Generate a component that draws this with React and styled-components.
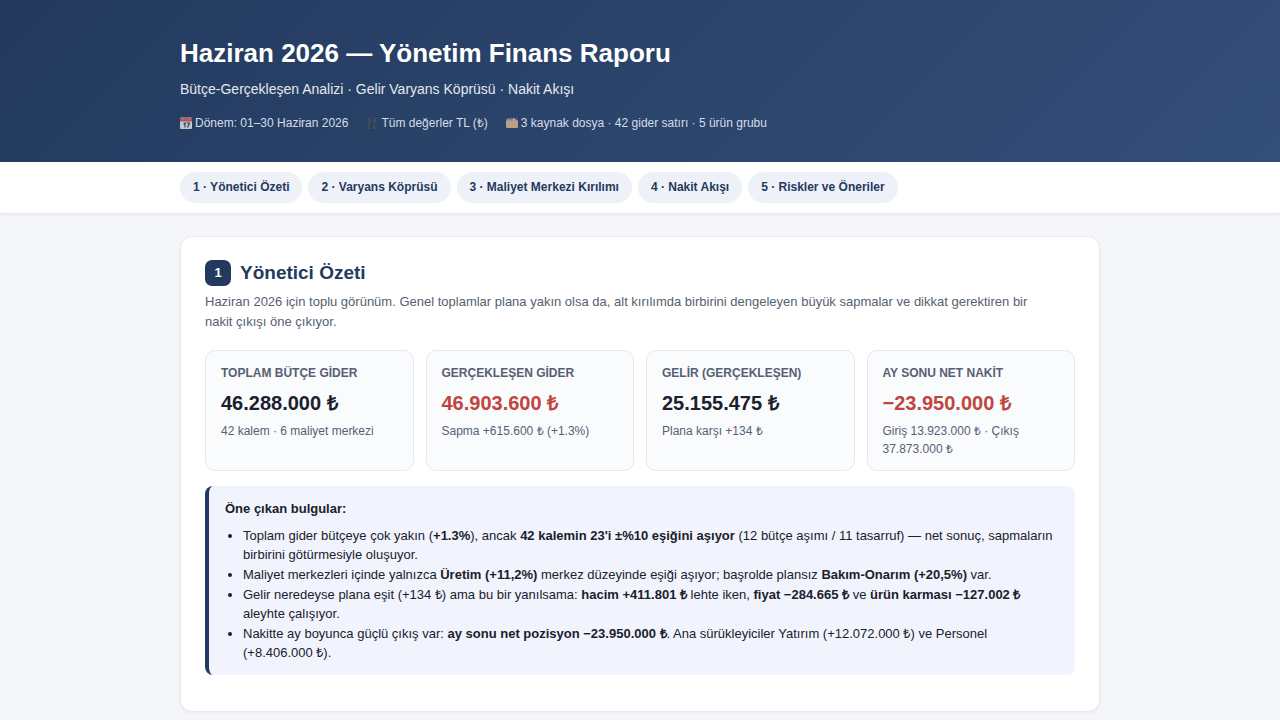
import React from "react"
import styled, { createGlobalStyle, ThemeProvider } from "styled-components"

const theme = {
  colors: {
    navy: "#233a5e",
    ink: "#1a202c",
    muted: "#566072",
    line: "#e4e8f0",
    page: "#f4f6fa",
    chip: "#eef1f8",
    tile: "#fafbfd",
    note: "#f1f4fc",
    red: "#bf463f",
  },
}

const GlobalStyle = createGlobalStyle`
  * {
    box-sizing: border-box;
  }
  body {
    margin: 0;
    background: ${theme.colors.page};
    color: ${theme.colors.ink};
    font-family: "Liberation Sans", Arial, sans-serif;
    font-size: 14px;
    line-height: 20px;
  }
`

const Wrap = styled.div`
  max-width: 968px;
  margin: 0 auto;
  padding: 0 24px;
`

const Header = styled.header`
  background: linear-gradient(135deg, #233a5e, #334e78);
  color: #fff;
  padding: 36px 0 28px;
`

const Title = styled.h1`
  margin: 0 0 8px;
  font-size: 26px;
  line-height: 34px;
`

const Subtitle = styled.p`
  margin: 0 0 12px;
  font-size: 14px;
  line-height: 22px;
  color: #e4e8ef;
`

const Meta = styled.div`
  display: flex;
  flex-wrap: wrap;
  gap: 18px;
  font-size: 12px;
  line-height: 22px;
  color: #d7dde7;
`

const MetaItem = styled.span`
  display: inline-flex;
  align-items: center;
  gap: 3px;
`

const Nav = styled.nav`
  background: #fff;
  border-bottom: 1px solid ${({ theme }) => theme.colors.line};
  box-shadow: 0 1px 4px rgba(20, 35, 60, 0.06);
  padding: 10px 0;
`

const NavList = styled(Wrap)`
  display: flex;
  flex-wrap: wrap;
  gap: 6px;
`

const NavLink = styled.a`
  padding: 6px 13px;
  border-radius: 16px;
  background: ${({ theme }) => theme.colors.chip};
  color: ${({ theme }) => theme.colors.navy};
  font-size: 12px;
  font-weight: 700;
  line-height: 19px;
  text-decoration: none;
`

const Main = styled(Wrap).attrs({ as: "main" })`
  padding-top: 22px;
  padding-bottom: 24px;
`

const Card = styled.section`
  background: #fff;
  border: 1px solid ${({ theme }) => theme.colors.line};
  border-radius: 12px;
  box-shadow: 0 1px 3px rgba(20, 35, 60, 0.05);
  padding: 23px 24px 36px;
`

const CardTitle = styled.h2`
  display: flex;
  align-items: center;
  gap: 9px;
  margin: 0 0 6px;
  font-size: 19px;
  line-height: 26px;
  color: ${({ theme }) => theme.colors.navy};
`

const Badge = styled.span`
  width: 26px;
  height: 26px;
  border-radius: 7px;
  background: ${({ theme }) => theme.colors.navy};
  color: #fff;
  font-size: 13px;
  text-align: center;
`

const Lead = styled.p`
  margin: 0 0 18px;
  padding-right: 24px;
  font-size: 13px;
  line-height: 20px;
  color: ${({ theme }) => theme.colors.muted};
`

const KpiGrid = styled.div`
  display: grid;
  grid-template-columns: repeat(auto-fit, minmax(190px, 1fr));
  gap: 12px;
  margin-bottom: 15px;
`

const Kpi = styled.div`
  background: ${({ theme }) => theme.colors.tile};
  border: 1px solid ${({ theme }) => theme.colors.line};
  border-radius: 10px;
  padding: 13px 15px 12px;
`

const KpiLabel = styled.div`
  font-size: 12px;
  font-weight: 700;
  line-height: 18px;
  color: ${({ theme }) => theme.colors.muted};
`

const KpiValue = styled.div`
  margin: 6px 0 4px;
  font-size: 20px;
  font-weight: 700;
  line-height: 30px;
  color: ${({ theme, $negative }) => ($negative ? theme.colors.red : theme.colors.ink)};
`

const KpiNote = styled.div`
  font-size: 12px;
  line-height: 18px;
  color: ${({ theme }) => theme.colors.muted};
`

const Findings = styled.div`
  background: ${({ theme }) => theme.colors.note};
  border-left: 4px solid ${({ theme }) => theme.colors.navy};
  border-radius: 8px;
  padding: 13px 16px;
  font-size: 13px;
  line-height: 19px;
`

const FindingList = styled.ul`
  display: grid;
  gap: 1px;
  margin: 8px 0 0;
  padding-left: 18px;
`

const CalendarIcon = () => (
  <svg width="12" height="12" viewBox="0 0 24 24" opacity="0.85" aria-hidden="true">
    <rect x="0" y="1" width="24" height="23" rx="2" fill="#dcdfe3" />
    <path d="M0 9V3a2 2 0 0 1 2-2h20a2 2 0 0 1 2 2v6z" fill="#b9605f" />
    <path d="M4 4h3M11 4h2M17 4h3" stroke="#e3a9a8" strokeWidth="2" />
    <path d="M7 14l3-2v9M13 12h6l-4 9" fill="none" stroke="#3b4048" strokeWidth="2.4" />
  </svg>
)

const CurrencyIcon = () => (
  <svg width="12" height="12" viewBox="0 0 24 24" fill="none" stroke="#474d58" strokeWidth="2.4" aria-hidden="true">
    <path d="M9.500 3.500C8 1.500 3 2 3 4.500S9.500 6 9.500 8.500 4 11 3 9M6 0v12" />
    <path d="M14 1l3.500 5L21 1M17.500 6v6M14 7h7M14 9.500h7" />
    <path d="M9 14.500c-2-2-4-.5-4 2V20c0 2-1 3-2 3h7M3 18h5" />
    <path d="M21 15c-3-2-6 0-6 4s3 5 6 3M13 18h6M13 20.500h6" />
  </svg>
)

const FolderIcon = () => (
  <svg width="12" height="12" viewBox="0 0 24 24" opacity="0.9" aria-hidden="true">
    <path d="M1 5a2 2 0 0 1 2-2h6l2 3h11a1 1 0 0 1 1 1v14H1z" fill="#a98f74" />
    <path d="M9 2h5v5H9z" fill="#6679c4" />
    <path d="M14 3h4v4h-4z" fill="#d9dce8" />
    <path d="M17 3h5v4h-5z" fill="#c75d5d" />
    <path d="M0 7h24v13a2 2 0 0 1-2 2H2a2 2 0 0 1-2-2z" fill="#c8ab88" />
  </svg>
)

const sections = [
  "Yönetici Özeti",
  "Varyans Köprüsü",
  "Maliyet Merkezi Kırılımı",
  "Nakit Akışı",
  "Riskler ve Öneriler",
]

const kpis = [
  { label: "TOPLAM BÜTÇE GİDER", value: "46.288.000 ₺", note: "42 kalem · 6 maliyet merkezi" },
  { label: "GERÇEKLEŞEN GİDER", value: "46.903.600 ₺", note: "Sapma +615.600 ₺ (+1.3%)", negative: true },
  { label: "GELİR (GERÇEKLEŞEN)", value: "25.155.475 ₺", note: "Plana karşı +134 ₺" },
  { label: "AY SONU NET NAKİT", value: "−23.950.000 ₺", note: "Giriş 13.923.000 ₺ · Çıkış 37.873.000 ₺", negative: true },
]

const App = () => {
  return (
    <ThemeProvider theme={theme}>
      <GlobalStyle />
      <Header>
        <Wrap>
          <Title>Haziran 2026 — Yönetim Finans Raporu</Title>
          <Subtitle>Bütçe-Gerçekleşen Analizi · Gelir Varyans Köprüsü · Nakit Akışı</Subtitle>
          <Meta>
            <MetaItem><CalendarIcon />Dönem: 01–30 Haziran 2026</MetaItem>
            <MetaItem><CurrencyIcon />Tüm değerler TL (₺)</MetaItem>
            <MetaItem><FolderIcon />3 kaynak dosya · 42 gider satırı · 5 ürün grubu</MetaItem>
          </Meta>
        </Wrap>
      </Header>
      <Nav>
        <NavList>
          {sections.map((name, i) => (
            <NavLink key={name} href={`#s${i + 1}`}>{`${i + 1} · ${name}`}</NavLink>
          ))}
        </NavList>
      </Nav>
      <Main>
        <Card id="s1">
          <CardTitle><Badge>1</Badge>Yönetici Özeti</CardTitle>
          <Lead>
            Haziran 2026 için toplu görünüm. Genel toplamlar plana yakın olsa da, alt kırılımda
            birbirini dengeleyen büyük sapmalar ve dikkat gerektiren bir nakit çıkışı öne çıkıyor.
          </Lead>
          <KpiGrid>
            {kpis.map(({ label, value, note, negative }) => (
              <Kpi key={label}>
                <KpiLabel>{label}</KpiLabel>
                <KpiValue $negative={negative}>{value}</KpiValue>
                <KpiNote>{note}</KpiNote>
              </Kpi>
            ))}
          </KpiGrid>
          <Findings>
            <strong>Öne çıkan bulgular:</strong>
            <FindingList>
              <li>
                Toplam gider bütçeye çok yakın (<b>+1.3%</b>), ancak <b>42 kalemin 23'i ±%10 eşiğini aşıyor</b> (12
                bütçe aşımı / 11 tasarruf) — net sonuç, sapmaların birbirini götürmesiyle oluşuyor.
              </li>
              <li>
                Maliyet merkezleri içinde yalnızca <b>Üretim (+11,2%)</b> merkez düzeyinde eşiği aşıyor; başrolde
                plansız <b>Bakım-Onarım (+20,5%)</b> var.
              </li>
              <li>
                Gelir neredeyse plana eşit (+134 ₺) ama bu bir yanılsama: <b>hacim +411.801 ₺</b> lehte
                iken, <b>fiyat −284.665 ₺</b> ve <b>ürün karması −127.002 ₺</b> aleyhte çalışıyor.
              </li>
              <li>
                Nakitte ay boyunca güçlü çıkış var: <b>ay sonu net pozisyon −23.950.000 ₺</b>. Ana sürükleyiciler
                Yatırım (+12.072.000 ₺) ve Personel (+8.406.000 ₺).
              </li>
            </FindingList>
          </Findings>
        </Card>
      </Main>
    </ThemeProvider>
  )
}

export default App
